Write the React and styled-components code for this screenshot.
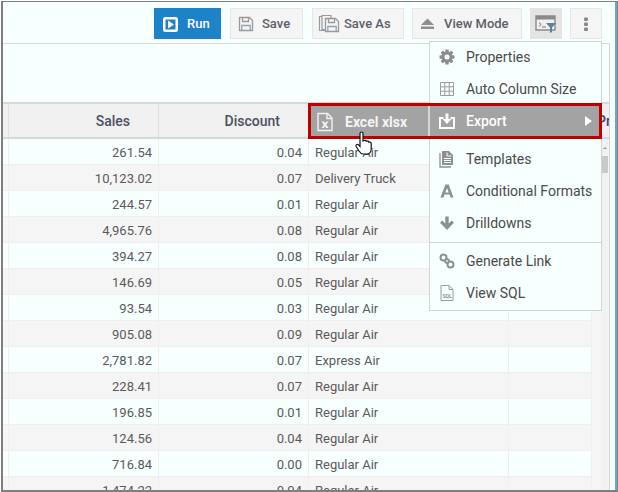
import React from "react";
import styled, { createGlobalStyle } from "styled-components";

const Global = createGlobalStyle`
  html, body { margin: 0; padding: 0; background: #fff; }
  body { font-family: Roboto, "Liberation Sans", sans-serif; }
`;

const Frame = styled.div`
  width: 618px;
  height: 492px;
  box-sizing: border-box;
  padding: 1px 0 0 1px;
  overflow: hidden;
`;

const Win = styled.div`
  position: relative;
  height: 491px;
  box-sizing: border-box;
  border: solid #7f7f7f;
  border-width: 1px 1px 2px 2px;
  overflow: hidden;
`;

const Inner = styled.div`
  height: 100%;
  box-sizing: border-box;
  background: #f8ffff;
  border-right: 2px solid #6aa7cf;
`;

const Toolbar = styled.div`
  height: 41px;
  box-sizing: border-box;
  padding: 6px 13px 4px 0;
  display: flex;
  justify-content: flex-end;
  gap: 8px;
`;

const ToolButton = styled.div`
  height: 31px;
  box-sizing: border-box;
  width: ${(p) => p.$w}px;
  margin-right: ${(p) => p.$after ?? 0}px;
  padding-left: ${(p) => p.$pad ?? 0}px;
  display: flex;
  align-items: center;
  justify-content: ${(p) => (p.$pad ? "flex-start" : "center")};
  gap: ${(p) => p.$gap ?? 8}px;
  font-size: 13px;
  font-weight: 500;
  color: ${(p) => (p.$primary ? "#fff" : "#5d6068")};
  background: ${(p) => (p.$primary ? "#1e82c8" : p.$active ? "#e4e4e4" : "#f5f5f5")};
  border: 1px solid ${(p) => (p.$primary ? "#1e82c8" : p.$active ? "#e4e4e4" : "#e6e6e6")};
`;

const Panel = styled.div`
  width: 607px;
  height: 447px;
  box-sizing: border-box;
  border-top: 1px solid #d8d8d8;
  border-right: 1px solid #d4d4d4;
  overflow: hidden;
`;

const Band = styled.div`
  height: 58px;
`;

const HeaderRow = styled.div`
  height: 37px;
  box-sizing: border-box;
  display: grid;
  grid-template-columns: 6px 150px 150px 200px minmax(0, 1fr);
  background: #f0f0f0;
  border-top: 2px solid #d8d8d8;
  border-bottom: 2px solid #d8d8d8;
`;

const HeaderCell = styled.div`
  box-sizing: border-box;
  display: flex;
  align-items: center;
  justify-content: ${(p) => (p.$left ? "flex-start" : "flex-end")};
  padding: ${(p) => (p.$pad !== undefined ? `0 0 0 ${p.$pad}px` : "0 28px 0 0")};
  border-right: ${(p) => (p.$open ? "none" : "1px solid #dedede")};
  font-size: 14px;
  font-weight: 500;
  color: ${(p) => (p.$open ? "#3a4274" : "#4b5060")};
  overflow: hidden;
  white-space: nowrap;
`;

const Body = styled.div`
  display: flex;
  background: #f5f5f5;
  height: 360px;
`;

const Rows = styled.div`
  width: 589px;
`;

const Row = styled.div`
  height: 26px;
  box-sizing: border-box;
  display: grid;
  grid-template-columns: 6px 150px 150px 200px 83px;
  background: ${(p) => (p.$alt ? "#f6f5f5" : "#f8ffff")};
  border-bottom: 1px solid #efefef;
`;

const StubCell = styled.div`
  box-sizing: border-box;
  border-right: 1px solid #efefef;
`;

const Cell = styled.div`
  box-sizing: border-box;
  display: flex;
  align-items: center;
  justify-content: ${(p) => (p.$left ? "flex-start" : "flex-end")};
  padding: ${(p) => (p.$left ? "2px 0 0 6px" : "2px 6px 0 0")};
  border-right: 1px solid #efefef;
  font-size: 13px;
  color: #5a5a5a;
  white-space: nowrap;
`;

const Scrollbar = styled.div`
  width: 7px;
  margin-left: 9px;
  background: #f1f1f1;
  display: flex;
  flex-direction: column;
  align-items: center;
`;

const ScrollArrow = styled.div`
  margin-top: 8px;
  width: 0;
  height: 0;
  border: 2px solid transparent;
  border-top: 0;
  border-bottom: 2px solid #999;
`;

const ScrollThumb = styled.div`
  margin-top: 7px;
  width: 7px;
  height: 17px;
  background: #c9c9c9;
`;

const Menu = styled.div`
  position: absolute;
  left: 426px;
  top: 39px;
  width: 173px;
  box-sizing: border-box;
  background: #f8ffff;
  border: 1px solid #d4d4d4;
`;

const MenuItem = styled.div`
  height: 32px;
  box-sizing: border-box;
  display: flex;
  align-items: center;
  gap: 10px;
  padding: 0 0 2px 8px;
  font-size: 14px;
  font-weight: ${(p) => (p.$active ? 500 : 400)};
  color: ${(p) => (p.$active ? "#fff" : "#4a4a4a")};
  background: ${(p) => (p.$active ? "#a3a3a3" : "transparent")};
  white-space: nowrap;
`;

const Divider = styled.div`
  height: 1px;
  background: ${(p) => (p.$clear ? "transparent" : "#d2d2d2")};
  margin: ${(p) => p.$m};
`;

const Sub = styled.div`
  position: absolute;
  left: 308px;
  top: 104px;
  width: 118px;
  height: 32px;
  box-sizing: border-box;
  background: #a3a3a3;
  border-right: 1px solid #d8d8d8;
  display: flex;
  align-items: center;
  gap: 10px;
  padding-left: 4px;
  font-size: 14px;
  font-weight: 700;
  color: #f4f4f4;
`;

const Highlight = styled.div`
  position: absolute;
  left: 305px;
  top: 101px;
  width: 294px;
  height: 36px;
  box-sizing: border-box;
  border: 3px solid #c00000;
  pointer-events: none;
`;

const Caret = styled.div`
  margin-left: auto;
  margin-right: 9px;
  width: 0;
  height: 0;
  border-left: 7px solid #fff;
  border-top: 5px solid transparent;
  border-bottom: 5px solid transparent;
`;

const Cursor = styled.svg`
  position: absolute;
  left: 352px;
  top: 129px;
`;

const Icon = ({ children, s = 18, vb = 18 }) => (
  <svg width={s} height={s} viewBox={`0 0 ${vb} ${vb}`} style={{ flex: "none" }}>
    {children}
  </svg>
);

const Floppy = ({ c = "#9a9a9a" }) => (
  <g fill="none" stroke={c} strokeWidth="1.3">
    <path d="M2.5 2.5h10l3 3v10h-13z" fill="#f5f5f5" />
    <path d="M5.5 2.5v4h6v-4" />
    <path d="M4.8 15.5v-5h8.4v5" stroke="#8fa3b5" />
  </g>
);

const RunIcon = () => (
  <Icon>
    <rect x="1" y="2" width="15" height="15" rx="2.5" fill="#fff" />
    <rect x="3.5" y="4.5" width="10" height="10" fill="#1e82c8" />
    <path d="M6 5.5l6 4-6 4z" fill="#fff" />
  </Icon>
);

const SaveAsIcon = () => (
  <Icon s={22} vb={22}>
    <path d="M1.5 3.5h9v14h-9z" fill="none" stroke="#9a9a9a" strokeWidth="1.2" />
    <path d="M4 2.5h9v14h-9z" fill="#f5f5f5" stroke="#9a9a9a" strokeWidth="1.2" />
    <g transform="translate(5 3)">
      <Floppy />
    </g>
  </Icon>
);

const EjectIcon = () => (
  <Icon s={15} vb={15}>
    <path d="M7.5 2.5l6.5 6.5h-13z" fill="#8e8e8e" />
    <rect x="1" y="10.5" width="13" height="2.5" fill="#8e8e8e" />
  </Icon>
);

const FilterIcon = () => (
  <Icon s={22} vb={22}>
    <path d="M1 3h19v14H1z" fill="#f0f0f0" stroke="#8a8a8a" strokeWidth="1.4" />
    <rect x="1" y="3" width="19" height="3.5" fill="#8a8a8a" />
    <path d="M4 9.5l2.2 2-2.2 2M7 14h4" fill="none" stroke="#777" strokeWidth="1" />
    <path d="M11 10h10l-4 4.5V19l-2 1v-5.500z" fill="#5d7f99" />
  </Icon>
);

const KebabIcon = () => (
  <Icon s={16} vb={16}>
    <rect x="6" y="1.500" width="4" height="3.500" rx="1" fill="#8a8a8a" />
    <rect x="6" y="6.500" width="4" height="3.500" rx="1" fill="#8a8a8a" />
    <rect x="6" y="11.500" width="4" height="3.500" rx="1" fill="#8a8a8a" />
  </Icon>
);

const GearIcon = () => (
  <Icon>
    <g fill="#8c8c8c">
      <circle cx="9" cy="9" r="5.500" />
      {[0, 45, 90, 135].map((a) => (
        <rect key={a} x="7.300" y="1.500" width="3.400" height="15" rx="0.600" transform={`rotate(${a} 9 9)`} />
      ))}
    </g>
    <circle cx="9" cy="9" r="2.500" fill="#f8ffff" />
  </Icon>
);

const GridIcon = () => (
  <Icon>
    <path d="M2.500 2.500h13v13h-13zM2.500 6.800h13M2.500 11.200h13M6.800 2.500v13M11.200 2.500v13" fill="none" stroke="#9a9a9a" />
  </Icon>
);

const ExportIcon = () => (
  <Icon>
    <path d="M5.500 6H2v10h14V6h-3.500" fill="none" stroke="#fff" strokeWidth="2" />
    <path d="M7.500 1.500h3V7h3L9 12 4.500 7h3z" fill="#fff" />
  </Icon>
);

const TemplatesIcon = () => (
  <Icon>
    <path d="M2 3v14h11" fill="none" stroke="#8f8f8f" strokeWidth="1.300" />
    <path d="M4 1h7l4 4v10H4z" fill="#8f8f8f" />
    <path d="M9 2.500v3.500h4.500M6 8.500h7M6 10.500h7M6 12.500h7" fill="none" stroke="#f8ffff" />
  </Icon>
);

const LetterAIcon = () => (
  <Icon>
    <path d="M7.400 2.500h3.200L15.500 15.500h-3l-1-3h-5l-1 3h-3zM9 6l-1.700 4.500h3.400z" fill="#8f8f8f" fillRule="evenodd" />
  </Icon>
);

const DownIcon = () => (
  <Icon>
    <path d="M7.300 2.500h3.400v7l3-3 2.300 2.300L9 16 2 8.800l2.300-2.300 3 3z" fill="#8f8f8f" />
  </Icon>
);

const LinkIcon = () => (
  <Icon>
    <g fill="none" stroke="#8f8f8f" strokeWidth="2">
      <circle cx="5.500" cy="5.500" r="3" />
      <circle cx="12.500" cy="12.500" r="3" />
      <path d="M6.500 9l2.500 2.500M9 6.500l2.500 2.500" />
    </g>
  </Icon>
);

const SqlIcon = () => (
  <Icon>
    <path d="M3 1.500h8l4 4v11H3z" fill="#f8ffff" stroke="#9a9a9a" />
    <path d="M11 1.500v4h4" fill="none" stroke="#9a9a9a" />
    <text x="9" y="13.500" fontSize="5" fontWeight="700" textAnchor="middle" fill="#8f8f8f" fontFamily="Roboto, sans-serif">
      SQL
    </text>
  </Icon>
);

const ExcelIcon = () => (
  <Icon s={20} vb={20}>
    <path d="M3 1.500h9.500l4.500 4.500v12.500H3z" fill="none" stroke="#f2f2f2" strokeWidth="1.400" />
    <path d="M12 1.500V6.500h5" fill="none" stroke="#f2f2f2" strokeWidth="1.400" />
    <path d="M6.500 9.500h2.700l1 1.800 1-1.800h2.300l-2.200 3.200 2.400 3.300h-2.700l-1-1.900-1.100 1.900H6.500l2.300-3.300z" fill="#f2f2f2" />
  </Icon>
);

const data = [
  ["261.54", "0.04", "Regular Air"],
  ["10,123.02", "0.07", "Delivery Truck"],
  ["244.57", "0.01", "Regular Air"],
  ["4,965.76", "0.08", "Regular Air"],
  ["394.27", "0.08", "Regular Air"],
  ["146.69", "0.05", "Regular Air"],
  ["93.54", "0.03", "Regular Air"],
  ["905.08", "0.09", "Regular Air"],
  ["2,781.82", "0.07", "Express Air"],
  ["228.41", "0.07", "Regular Air"],
  ["196.85", "0.01", "Regular Air"],
  ["124.56", "0.04", "Regular Air"],
  ["716.84", "0.00", "Regular Air"],
  ["1,474.22", "0.04", "Regular Air"],
];

export default function App() {
  return (
    <Frame>
      <Global />
      <Win>
        <Inner>
          <Toolbar>
            <ToolButton $primary $w={67} $pad={7} $gap={7} $after={1}>
              <RunIcon />
              Run
            </ToolButton>
            <ToolButton $w={73} $pad={6} $gap={7} $after={1}>
              <Icon>
                <Floppy />
              </Icon>
              Save
            </ToolButton>
            <ToolButton $w={92} $pad={5} $gap={4}>
              <SaveAsIcon />
              Save As
            </ToolButton>
            <ToolButton $w={110} $pad={7} $gap={9}>
              <EjectIcon />
              View Mode
            </ToolButton>
            <ToolButton $active $w={32}>
              <FilterIcon />
            </ToolButton>
            <ToolButton $w={32}>
              <KebabIcon />
            </ToolButton>
          </Toolbar>
          <Panel>
            <Band />
            <HeaderRow>
              <HeaderCell $pad={0} />
              <HeaderCell>Sales</HeaderCell>
              <HeaderCell>Discount</HeaderCell>
              <HeaderCell />
              <HeaderCell $left $open $pad={88}>Product</HeaderCell>
            </HeaderRow>
            <Body>
              <Rows>
                {data.map(([sales, discount, mode], i) => (
                  <Row key={sales} $alt={i % 2 === 1}>
                    <StubCell />
                    <Cell>{sales}</Cell>
                    <Cell>{discount}</Cell>
                    <Cell $left>{mode}</Cell>
                    <Cell />
                  </Row>
                ))}
              </Rows>
              <Scrollbar>
                <ScrollArrow />
                <ScrollThumb />
              </Scrollbar>
            </Body>
          </Panel>
        </Inner>
        <Menu>
          <MenuItem><GearIcon />Properties</MenuItem>
          <MenuItem><GridIcon />Auto Column Size</MenuItem>
          <MenuItem $active>
            <ExportIcon />
            Export
            <Caret />
          </MenuItem>
          <Divider $clear $m="5px 0 0" />
          <MenuItem><TemplatesIcon />Templates</MenuItem>
          <MenuItem><LetterAIcon />Conditional Formats</MenuItem>
          <MenuItem><DownIcon />Drilldowns</MenuItem>
          <Divider $m="2px 0 3px" />
          <MenuItem><LinkIcon />Generate Link</MenuItem>
          <MenuItem><SqlIcon />View SQL</MenuItem>
        </Menu>
        <Sub>
          <ExcelIcon />
          Excel xlsx
        </Sub>
        <Highlight />
        <Cursor width="18" height="26" viewBox="0 0 18 26">
          <path
            d="M5 2.500c0-2 3-2 3 0V10l1-.5c1-.5 2 0 2.300.8 1-.6 2.200-.2 2.500.8 1-.4 2.400.2 2.400 1.600v5.300c0 2.500-1.500 5-4 5H8c-2 0-3-1.500-4-3L1.200 15.500c-.8-1.500 1-3 2.300-1.700L5 15.500z"
            fill="#fff"
            stroke="#111"
            strokeWidth="1.200"
          />
        </Cursor>
      </Win>
    </Frame>
  );
}
